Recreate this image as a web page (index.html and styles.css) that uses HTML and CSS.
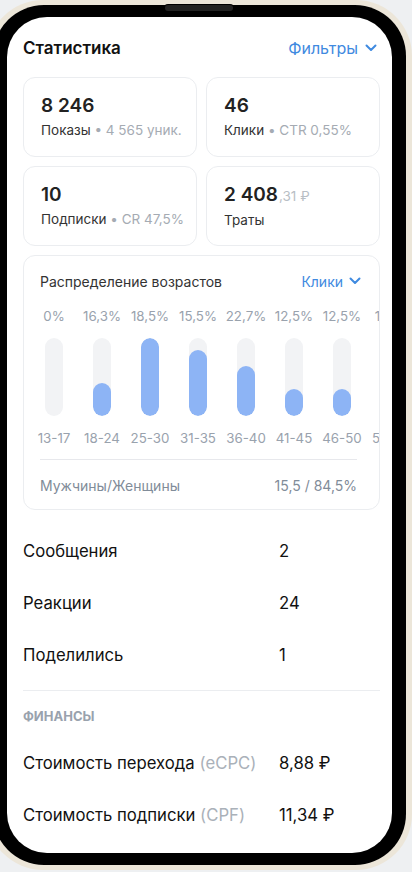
FILE: index.html
```html
<!DOCTYPE html>
<html lang="ru">
<head>
<meta charset="UTF-8">
<meta name="viewport" content="width=device-width, initial-scale=1.0">
<title>Статистика</title>
<link rel="stylesheet" href="styles.css">
</head>
<body>

<div class="phone">
  <div class="speaker"></div>
  <div class="bezel">
    <div class="screen">

      <div class="header">
        <h2>Статистика</h2>
        <a class="link" href="#">Фильтры
          <svg width="12" height="8" viewBox="0 0 12 8"><path d="M1.5 1.5 L6 6 L10.5 1.5" fill="none" stroke="currentColor" stroke-width="2" stroke-linecap="round" stroke-linejoin="round"/></svg>
        </a>
      </div>

      <div class="cards">
        <div class="card">
          <div class="num">8 246</div>
          <div class="sub">Показы <span class="muted">• 4 565 уник.</span></div>
        </div>
        <div class="card">
          <div class="num">46</div>
          <div class="sub">Клики <span class="muted">• CTR 0,55%</span></div>
        </div>
        <div class="card">
          <div class="num">10</div>
          <div class="sub">Подписки <span class="muted">• CR 47,5%</span></div>
        </div>
        <div class="card">
          <div class="num">2 408<span class="cents">,31 ₽</span></div>
          <div class="sub">Траты</div>
        </div>
      </div>

      <div class="ages">
        <div class="ages-head">
          <span>Распределение возрастов</span>
          <a class="link small" href="#">Клики
            <svg width="12" height="8" viewBox="0 0 12 8"><path d="M1.5 1.5 L6 6 L10.5 1.5" fill="none" stroke="currentColor" stroke-width="2" stroke-linecap="round" stroke-linejoin="round"/></svg>
          </a>
        </div>
        <div class="chart" id="chart"></div>
        <div class="gender">
          <span>Мужчины/Женщины</span>
          <span>15,5 / 84,5%</span>
        </div>
      </div>

      <div class="rows">
        <div class="row"><span>Сообщения</span><span>2</span></div>
        <div class="row"><span>Реакции</span><span>24</span></div>
        <div class="row"><span>Поделились</span><span>1</span></div>
      </div>

      <div class="section-title">Финансы</div>

      <div class="rows">
        <div class="row"><span>Стоимость перехода <span class="hint">(eCPC)</span></span><span>8,88 ₽</span></div>
        <div class="row"><span>Стоимость подписки <span class="hint">(CPF)</span></span><span>11,34 ₽</span></div>
      </div>

    </div>
  </div>
</div>

<script>
// age groups: label, percent text, fill height in px (track is 78px)
var ages = [
  { label: "13-17", pct: "0%", h: 0 },
  { label: "18-24", pct: "16,3%", h: 33 },
  { label: "25-30", pct: "18,5%", h: 78 },
  { label: "31-35", pct: "15,5%", h: 66 },
  { label: "36-40", pct: "22,7%", h: 50 },
  { label: "41-45", pct: "12,5%", h: 27 },
  { label: "46-50", pct: "12,5%", h: 27 },
  { label: "51-55", pct: "1,9%", h: 20 }
];

var chart = document.getElementById("chart");
ages.forEach(a => {
  var col = document.createElement("div");
  col.className = "col";
  col.innerHTML =
    '<div class="pct">' + a.pct + '</div>' +
    '<div class="track"><div class="fill" style="height:' + a.h + 'px"></div></div>' +
    '<div class="age">' + a.label + '</div>';
  chart.appendChild(col);
});
</script>

</body>
</html>
```

FILE: styles.css
```css
body {
  margin: 0;
  padding: 0;
  background-color: #eef0f2;
  font-family: Inter, Roboto, "Noto Sans", Arial, sans-serif;
  color: #000;
  overflow: hidden;
}

.phone {
  position: relative;
  width: 425px;
  height: 870px;
  margin-left: -13px;
  box-sizing: border-box;
  padding: 5px 6px;
  background-color: #ece6d9;
  border-radius: 56px;
}

.speaker {
  position: absolute;
  top: 5px;
  left: 178px;
  width: 68px;
  height: 6px;
  background-color: #222;
  border-radius: 3px;
  box-shadow: 0 0 0 1px #000;
}

.bezel {
  height: 100%;
  box-sizing: border-box;
  padding: 12px 14px;
  background-color: #000;
  border-radius: 51px;
}

.screen {
  height: 100%;
  box-sizing: border-box;
  padding: 15px 12px 0 16px;
  background-color: #fff;
  border-radius: 40px;
  overflow: hidden;
}

.header {
  display: flex;
  justify-content: space-between;
  align-items: center;
  height: 32px;
}

.header h2 {
  margin: 0;
  font-size: 17px;
  font-weight: 600;
  color: #111;
}

.link {
  display: flex;
  align-items: center;
  gap: 7px;
  color: #3f8ae0;
  text-decoration: none;
  font-size: 16px;
  margin-right: 3px;
}

.link.small {
  font-size: 14px;
  gap: 6px;
  margin-right: 2px;
}

.cards {
  display: grid;
  grid-template-columns: 1fr 1fr;
  gap: 9px;
  margin-top: 13px;
}

.card {
  height: 80px;
  box-sizing: border-box;
  padding: 16px 6px 0 17px;
  border: 1px solid #ebedf0;
  border-radius: 12px;
  white-space: nowrap;
}

.num {
  font-size: 19px;
  font-weight: 600;
  line-height: 24px;
  color: #222;
}

.cents {
  font-size: 13.5px;
  font-weight: 400;
  color: #b8bec5;
  margin-left: 1px;
}

.sub {
  margin-top: 3px;
  font-size: 13.5px;
  line-height: 18px;
  color: #333;
}

.muted {
  color: #a5abb3;
}

.ages {
  margin-top: 9px;
  height: 255px;
  box-sizing: border-box;
  padding: 15px 16px 0 16px;
  border: 1px solid #ebedf0;
  border-radius: 12px;
  overflow: hidden;
}

.ages-head {
  display: flex;
  justify-content: space-between;
  align-items: center;
  height: 20px;
  font-size: 14px;
  color: #333;
}

.chart {
  display: flex;
  margin: 16px -17px 0 -10px;
  overflow: hidden;
}

.col {
  flex-shrink: 0;
  width: 48px;
  display: flex;
  flex-direction: column;
  align-items: center;
}

.pct,
.age {
  font-size: 13.3px;
  line-height: 18px;
  color: #99a2ad;
  white-space: nowrap;
}

.track {
  display: flex;
  align-items: flex-end;
  width: 18px;
  height: 78px;
  margin: 13px 0;
  background-color: #f2f3f5;
  border-radius: 9px;
  overflow: hidden;
}

.fill {
  width: 100%;
  background-color: #8db4f5;
  border-radius: 9px;
}

.gender {
  display: flex;
  justify-content: space-between;
  align-items: center;
  margin: 12px 6px 0 0;
  padding-top: 16px;
  border-top: 1px solid #e7e8ec;
  font-size: 14px;
  line-height: 20px;
  color: #818c99;
}

.rows {
  margin-top: 15px;
}

.row {
  display: grid;
  grid-template-columns: 256px 1fr;
  align-items: center;
  height: 52px;
  font-size: 16.7px;
  color: #111;
}

.hint {
  color: #aab1b9;
}

.section-title {
  margin-top: 9px;
  padding-top: 16px;
  border-top: 1px solid #ebedf0;
  font-size: 13px;
  line-height: 18px;
  font-weight: 700;
  text-transform: uppercase;
  color: #99a2ad;
}

.section-title + .rows {
  margin-top: 12px;
}
```
